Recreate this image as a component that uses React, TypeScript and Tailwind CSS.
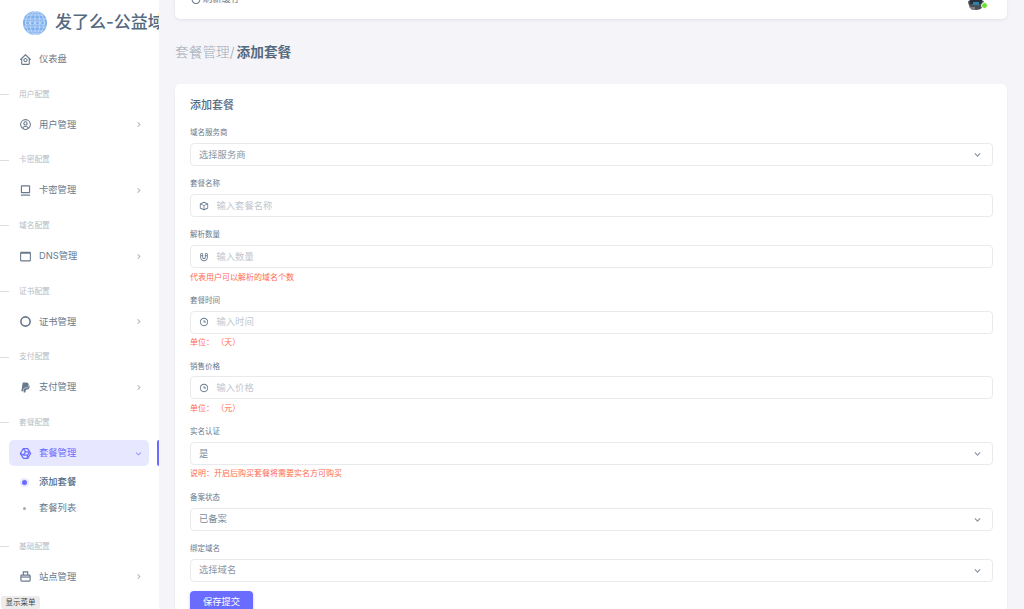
import React from "react";
import { BiHomeCircle, BiUserCircle, BiWindow, BiLogoPaypal, BiCube, BiChevronRight, BiChevronDown, BiMagnet, BiTime, BiRevision } from "react-icons/bi";

const font = "font-['Inter','Noto_Sans_CJK_SC',sans-serif]";

function CardIcon() {
  return (
    <svg viewBox="0 0 24 24" width="1em" height="1em" fill="none" stroke="currentColor" strokeWidth="2.2">
      <rect x="4.5" y="3.5" width="15" height="12.5" rx="1" />
      <path d="M3.5 20.5h17" />
    </svg>
  );
}

function RingIcon() {
  return (
    <svg viewBox="0 0 24 24" width="1em" height="1em" fill="none" stroke="currentColor" strokeWidth="3">
      <circle cx="12" cy="12" r="8.5" />
    </svg>
  );
}

function SiteIcon() {
  return (
    <svg viewBox="0 0 24 24" width="1em" height="1em" fill="none" stroke="currentColor" strokeWidth="2.2">
      <path d="M8 9V3.5h8V9" />
      <rect x="3.5" y="9.5" width="17" height="11" rx="1.5" />
      <path d="M3.5 13h17" />
    </svg>
  );
}

function PackIcon() {
  return (
    <svg viewBox="0 0 24 24" width="1em" height="1em" fill="none" stroke="currentColor" strokeWidth="2.2">
      <path d="M8 3h8l5.5 9-5.5 9H8l-5.5-9z" />
      <path d="M8 3l4 6h7M12 9l-4 6 M8 15h8l3-5M8 15l-5-3M16 15l-1 6" />
    </svg>
  );
}

function Section({ label }: { label: string }) {
  return (
    <div className="flex items-center h-[16px] mt-[14.5px] mb-[9.2px]">
      <div className="w-[9px] h-px bg-[#d9dee3]" />
      <span className="ml-[10px] text-[7.7px] text-[#b4bdc6]">{label}</span>
    </div>
  );
}

function Item({ icon, label, active, noArrow }: { icon: React.ReactNode; label: string; active?: boolean; noArrow?: boolean }) {
  return (
    <div className={`relative flex items-center h-[26px] ml-[9px] mr-[10px] pl-[10px] pr-[5px] rounded-[5px] ${active ? "bg-[#e7e7ff] text-[#696cff]" : "text-[#697a8d]"}`}>
      <span className="w-[20px] text-[13px] flex items-center">{icon}</span>
      <span className="text-[9.3px] flex-1">{label}</span>
      {!noArrow && (active ? <BiChevronDown className="text-[11px] text-[#8f93f5]" /> : <BiChevronRight className="text-[11px] text-[#a1acb8]" />)}
      {active && <div className="absolute left-[148px] top-0 w-[2px] h-[26px] rounded-l bg-[#696cff]" />}
    </div>
  );
}

function Field({ label, children, help }: { label: string; children: React.ReactNode; help?: string }) {
  return (
    <div className={help ? "mb-[11.67px]" : "mb-[11px]"}>
      <div className="h-[12px] pt-[2px] mb-[5px] flex items-center text-[7.5px] text-[#697a8d]">{label}</div>
      {children}
      {help && <div className="h-[12px] pt-[1px] mt-[2px] flex items-center text-[8px] text-[#ff6a50] whitespace-pre">{help}</div>}
    </div>
  );
}

function Select({ value, muted }: { value: string; muted?: boolean }) {
  return (
    <div className="h-[23px] rounded-[4px] border border-[#e8ebee] bg-white flex items-center pl-[8px] pr-[8px]">
      <span className={`flex-1 text-[9.3px] ${muted ? "text-[#8a97a5]" : "text-[#7d8b99]"}`}>{value}</span>
      <BiChevronDown className="text-[13px] text-[#8a97a5]" />
    </div>
  );
}

function Input({ icon, placeholder }: { icon: React.ReactNode; placeholder: string }) {
  return (
    <div className="h-[23px] rounded-[4px] border border-[#e8ebee] bg-white flex items-center pl-[8px]">
      <span className="w-[17.5px] text-[10px] text-[#697a8d] flex items-center">{icon}</span>
      <span className="text-[9.3px] text-[#c0c7cf]">{placeholder}</span>
    </div>
  );
}

function Globe() {
  return (
    <svg width="24" height="24" viewBox="0 0 24 24" className="shrink-0">
      <circle cx="12" cy="12" r="12" fill="#7fb0ee" />
      <g fill="none" stroke="#dbe9fb" strokeWidth="0.6">
        <ellipse cx="12" cy="12" rx="5" ry="11.5" />
        <ellipse cx="12" cy="12" rx="9.5" ry="11.5" />
        <path d="M1 8h22M1 16h22M4 4h16M4 20h16M12 0v24" />
        <circle cx="4.5" cy="12" r="2" />
        <circle cx="9.5" cy="12" r="2" />
        <circle cx="14.5" cy="12" r="2" />
        <circle cx="19.5" cy="12" r="2" />
      </g>
    </svg>
  );
}

function Avatar() {
  return (
    <div className="relative mt-[5px] w-[18px] h-[18px]">
      <svg viewBox="0 0 18 18" width="18" height="18">
        <path d="M1 9c1-4 15-4 16 0 0 5-3 8-8 8s-7-3-8-8z" fill="#4a5058" />
        <path d="M3 6h12v5H3z" fill="#27303b" />
        <path d="M6 9h6v3H6z" fill="#2f7fa8" />
        <path d="M2 14h6v3H5z" fill="#7c8088" />
      </svg>
      <span className="absolute right-[-3px] bottom-[2px] w-[7px] h-[7px] rounded-full bg-[#71dd37] border border-white" />
    </div>
  );
}

export default function App() {
  return (
    <div className={`${font} relative flex h-[609px] w-[1024px] overflow-hidden bg-[#f5f5f9]`}>
      <aside className="w-[159px] shrink-0 bg-white h-full overflow-hidden">
        <div className="flex items-center h-[46px] pl-[23px] whitespace-nowrap">
          <Globe />
          <span className="ml-[8px] text-[17px] font-medium text-[#566a7f]">发了么-公益域名</span>
        </div>
        <Item icon={<BiHomeCircle />} label="仪表盘" noArrow />
        <Section label="用户配置" />
        <Item icon={<BiUserCircle />} label="用户管理" />
        <Section label="卡密配置" />
        <Item icon={<CardIcon />} label="卡密管理" />
        <Section label="域名配置" />
        <Item icon={<BiWindow />} label="DNS管理" />
        <Section label="证书配置" />
        <Item icon={<RingIcon />} label="证书管理" />
        <Section label="支付配置" />
        <Item icon={<BiLogoPaypal />} label="支付管理" />
        <Section label="套餐配置" />
        <Item active icon={<PackIcon />} label="套餐管理" />
        <div className="mt-[3px] flex items-center h-[26px] pl-[22px]">
          <span className="w-[5px] h-[5px] rounded-full bg-[#696cff] ring-2 ring-[#e7e7ff]" />
          <span className="ml-[12px] text-[9.3px] font-medium text-[#566a7f]">添加套餐</span>
        </div>
        <div className="flex items-center h-[26px] pl-[23px]">
          <span className="w-[3px] h-[3px] rounded-full bg-[#a1acb8]" />
          <span className="ml-[13px] text-[9.3px] text-[#697a8d]">套餐列表</span>
        </div>
        <div className="h-[3px]" />
        <Section label="基础配置" />
        <Item icon={<SiteIcon />} label="站点管理" />
      </aside>

      <main className="flex-1 pl-[16px] pr-[17px] min-w-0">
        <div className="-mt-[21px] h-[40px] rounded-[5px] bg-white shadow-[0_1px_3px_rgba(67,89,113,0.12)] flex items-center justify-between pl-[15px] pr-[22px]">
          <div className="flex items-center gap-[1px] text-[#697a8d]">
            <BiRevision className="text-[12px]" />
            <span className="text-[9.3px]">刷新缓存</span>
          </div>
          <Avatar />
        </div>
        <h1 className="mt-[23px] h-[20px] flex items-center text-[13.7px]">
          <span className="font-light text-[#a1acb8]">套餐管理/</span>
          <span className="ml-[2px] font-semibold text-[#566a7f]">添加套餐</span>
        </h1>
        <section className="mt-[22px] rounded-[5px] bg-white shadow-[0_1px_3px_rgba(67,89,113,0.08)] pl-[15px] pr-[14px] h-[560px]">
          <h2 className="h-[42px] flex items-center text-[11px] font-medium text-[#566a7f]">添加套餐</h2>
          <Field label="域名服务商"><Select value="选择服务商" muted /></Field>
          <Field label="套餐名称"><Input icon={<BiCube />} placeholder="输入套餐名称" /></Field>
          <Field label="解析数量" help="代表用户可以解析的域名个数"><Input icon={<BiMagnet />} placeholder="输入数量" /></Field>
          <Field label="套餐时间" help="单位： （天）"><Input icon={<BiTime />} placeholder="输入时间" /></Field>
          <Field label="销售价格" help="单位： （元）"><Input icon={<BiTime />} placeholder="输入价格" /></Field>
          <Field label="实名认证" help="说明：开启后购买套餐将需要实名方可购买"><Select value="是" /></Field>
          <Field label="备案状态"><Select value="已备案" /></Field>
          <Field label="绑定域名"><Select value="选择域名" muted /></Field>
          <button className="block -mt-[2px] w-[63px] h-[23px] rounded-[4px] bg-[#696cff] text-white text-[9.3px] shadow-[0_1px_3px_rgba(105,108,255,0.4)]">保存提交</button>
        </section>
      </main>

      <div className="absolute left-[1px] top-[596px] w-[39px] h-[13px] rounded-[2px] bg-[#ececec] flex items-center justify-center text-[7.5px] text-[#444]">显示菜单</div>
    </div>
  );
}
